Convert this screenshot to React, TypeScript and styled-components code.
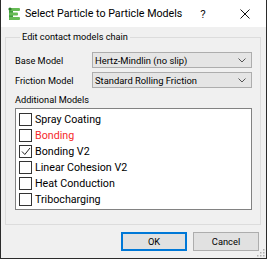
import React from "react";
import styled, { createGlobalStyle } from "styled-components";

const Global = createGlobalStyle`
  html, body { margin: 0; padding: 0; }
  body { font-family: Roboto, "Noto Sans", sans-serif; background: #f0f0f0; }
  * { box-sizing: border-box; }
`;

const Win = styled.div`
  width: 267px;
  height: 259px;
  background: #f0f0f0;
  border: 1px solid #2b2b2b;
  border-top: none;
  display: flex;
  flex-direction: column;
  position: relative;
  overflow: hidden;
`;

const TitleBar = styled.div`
  height: 27px;
  background: #ffffff;
  display: flex;
  align-items: center;
  padding-left: 7px;
  flex-shrink: 0;
`;

const TitleText = styled.span`
  font-size: 10.7px;
  color: #000;
  margin-left: 4px;
  flex: 1;
  white-space: nowrap;
`;

const TitleBtn = styled.span<{ $w: number; $mr?: number }>`
  width: ${(p) => p.$w}px;
  margin-right: ${(p) => p.$mr ?? 0}px;
  display: flex;
  justify-content: center;
  font-size: 11.5px;
  color: #111;
`;

const Body = styled.div`
  flex: 1;
  display: flex;
  flex-direction: column;
  padding: 4px 5px 0 4px;
  font-size: 9.2px;
  color: #000;
`;

const Group = styled.fieldset`
  margin: 0;
  border: 1px solid #dcdcdc;
  padding: 9px 8px 6px 9px;
  height: 194px;
  display: flex;
  flex-direction: column;
  min-width: 0;
`;

const Legend = styled.legend`
  padding: 0 2px;
  margin-left: 5px;
  font-size: 9.2px;
  line-height: 12px;
`;

const FormRow = styled.div`
  display: flex;
  align-items: center;
  height: 16px;
  margin-bottom: 4px;
`;

const Label = styled.span`
  width: 77px;
  font-size: 9.2px;
  white-space: nowrap;
`;

const Combo = styled.div`
  flex: 1;
  height: 16px;
  background: #e5e5e5;
  border: 1px solid #adadad;
  display: flex;
  align-items: center;
  padding: 0 0 0 2px;
  white-space: nowrap;
  font-size: 9.4px;
`;

const ComboText = styled.span`
  flex: 1;
`;

const Chevron = styled.svg`
  width: 8px;
  height: 5px;
  margin-right: 5px;
`;

const SectionLabel = styled.div`
  height: 16px;
  line-height: 15px;
  font-size: 9.2px;
`;

const List = styled.div`
  background: #fff;
  border: 1px solid #828282;
  flex: 1;
  padding: 2px 3px;
  display: flex;
  flex-direction: column;
`;

const Item = styled.label<{ $red?: boolean }>`
  display: flex;
  align-items: center;
  height: 16px;
  font-size: 10.7px;
  color: ${(p) => (p.$red ? "#f52a2a" : "#000")};
  white-space: nowrap;
`;

const Box = styled.span`
  width: 13px;
  height: 13px;
  border: 1px solid #333;
  background: #fff;
  margin-right: 3px;
  display: flex;
  align-items: center;
  justify-content: center;
`;

const Buttons = styled.div`
  display: flex;
  justify-content: flex-end;
  gap: 6px;
  padding: 7px 2px 0 0;
`;

const Btn = styled.div<{ $def?: boolean }>`
  width: 66px;
  height: 19px;
  background: #e1e1e1;
  border: ${(p) => (p.$def ? "2px solid #0078d7" : "1px solid #adadad")};
  display: flex;
  align-items: center;
  justify-content: center;
  font-size: 9.3px;
`;

const Grip = styled.svg`
  position: absolute;
  right: 1px;
  bottom: 1px;
  width: 8px;
  height: 8px;
`;

const ChevronIcon = () => (
  <Chevron viewBox="0 0 8 5">
    <path d="M0.5 0.5 L4 4 L7.5 0.5" fill="none" stroke="#555" strokeWidth="1" />
  </Chevron>
);

const Check = () => (
  <svg width="10" height="9" viewBox="0 0 10 9">
    <path d="M1 4.5 L3.8 7.5 L9 1" fill="none" stroke="#222" strokeWidth="1" />
  </svg>
);

const AppIcon = () => (
  <svg width="13" height="14" viewBox="0 0 13 14">
    <rect x="1" y="1" width="4" height="12" fill="#3f9a3f" />
    <rect x="1" y="1" width="11" height="3" rx="1" fill="#66bb55" />
    <rect x="1" y="5.5" width="9" height="3" rx="1" fill="#66bb55" />
    <rect x="1" y="10" width="11" height="3" rx="1" fill="#66bb55" />
    <circle cx="2" cy="2" r="1.6" fill="#2c7a2c" />
  </svg>
);

const items: { name: string; checked?: boolean; red?: boolean }[] = [
  { name: "Spray Coating" },
  { name: "Bonding", red: true },
  { name: "Bonding V2", checked: true },
  { name: "Linear Cohesion V2" },
  { name: "Heat Conduction" },
  { name: "Tribocharging" },
];

export default function App() {
  return (
    <>
      <Global />
      <Win>
        <TitleBar>
          <AppIcon />
          <TitleText>Select Particle to Particle Models</TitleText>
          <TitleBtn $w={20} $mr={11}>?</TitleBtn>
          <TitleBtn $w={42}>
            <svg width="10" height="10" viewBox="0 0 10 10">
              <path d="M0.5 0.5 L9.5 9.5 M9.5 0.5 L0.5 9.5" stroke="#111" strokeWidth="1" />
            </svg>
          </TitleBtn>
        </TitleBar>
        <Body>
          <Group>
            <Legend>Edit contact models chain</Legend>
            <FormRow>
              <Label>Base Model</Label>
              <Combo>
                <ComboText>Hertz-Mindlin (no slip)</ComboText>
                <ChevronIcon />
              </Combo>
            </FormRow>
            <FormRow>
              <Label>Friction Model</Label>
              <Combo>
                <ComboText>Standard Rolling Friction</ComboText>
                <ChevronIcon />
              </Combo>
            </FormRow>
            <SectionLabel>Additional Models</SectionLabel>
            <List>
              {items.map((it) => (
                <Item key={it.name} $red={it.red}>
                  <Box>{it.checked && <Check />}</Box>
                  {it.name}
                </Item>
              ))}
            </List>
          </Group>
          <Buttons>
            <Btn $def>OK</Btn>
            <Btn>Cancel</Btn>
          </Buttons>
        </Body>
        <Grip viewBox="0 0 8 8">
          {[
            [6, 0], [6, 3], [3, 3], [6, 6], [3, 6], [0, 6],
          ].map(([x, y], i) => (
            <rect key={i} x={x} y={y} width="1.5" height="1.5" fill="#b0b0b0" />
          ))}
        </Grip>
      </Win>
    </>
  );
}
